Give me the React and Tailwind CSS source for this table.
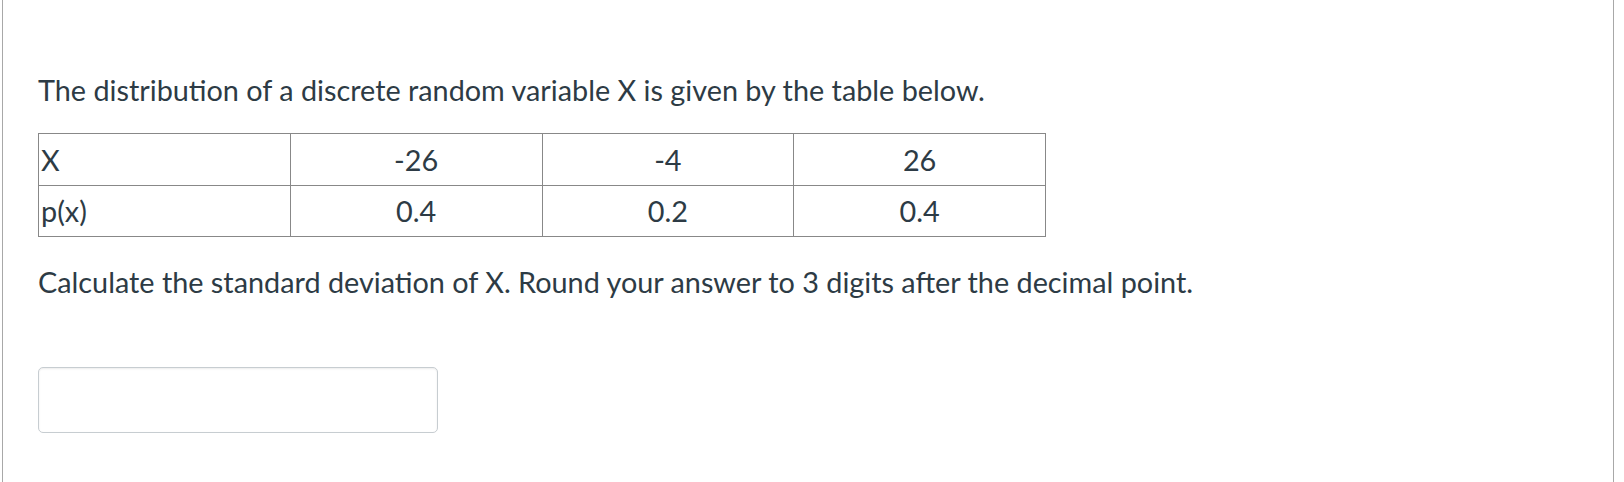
export default function App() {
  const xs = ["-26", "-4", "26"];
  const ps = ["0.4", "0.2", "0.4"];

  return (
    <div className="w-[1624px] h-[482px] bg-white overflow-hidden">
      <div
        className="ml-[2px] w-[1612px] h-[482px] border-x border-[#a8a8a8] px-[35px] pt-[72px] text-[#2d3b45] text-[28.8px]"
        style={{ fontFamily: "Lato, 'Liberation Sans', sans-serif" }}
      >
        <p className="leading-[36px]">
          The distribution of a discrete random variable X is given by the table below.
        </p>

        <table className="mt-[25px] w-[1008px] table-fixed border-collapse">
          <tbody>
            <tr className="h-[52px]">
              <td className="border border-[#888] px-[2px] leading-[34px]">X</td>
              {xs.map((v, i) => (
                <td key={i} className="border border-[#888] text-center leading-[34px]">
                  {v}
                </td>
              ))}
            </tr>
            <tr className="h-[51px]">
              <td className="border border-[#888] px-[2px] leading-[34px]">p(x)</td>
              {ps.map((v, i) => (
                <td key={i} className="border border-[#888] text-center leading-[34px]">
                  {v}
                </td>
              ))}
            </tr>
          </tbody>
        </table>

        <p className="mt-[27px] leading-[36px]">
          Calculate the standard deviation of X. Round your answer to 3 digits after the decimal point.
        </p>

        <input
          type="text"
          className="block mt-[67px] w-[400px] h-[66px] rounded-[5px] border border-[#c7cdd1] bg-white outline-none shadow-[inset_0_1px_2px_rgba(0,0,0,0.08)]"
        />
      </div>
    </div>
  );
}
